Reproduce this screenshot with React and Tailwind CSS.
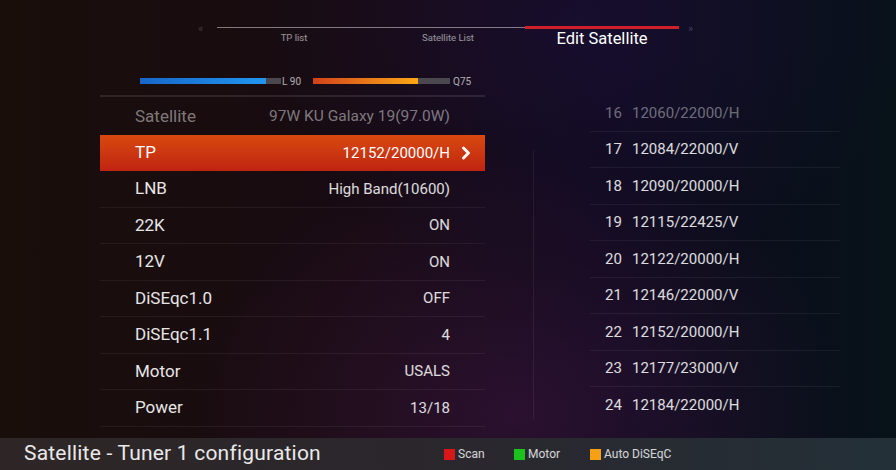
import { ChevronRight } from 'lucide-react'

const tabs = [
  { label: 'TP list' },
  { label: 'Satellite List' },
  { label: 'Edit Satellite', active: true },
]

const settings = [
  { label: 'Satellite', value: '97W KU Galaxy 19(97.0W)', dim: true },
  { label: 'TP', value: '12152/20000/H', active: true },
  { label: 'LNB', value: 'High Band(10600)' },
  { label: '22K', value: 'ON' },
  { label: '12V', value: 'ON' },
  { label: 'DiSEqc1.0', value: 'OFF' },
  { label: 'DiSEqc1.1', value: '4' },
  { label: 'Motor', value: 'USALS' },
  { label: 'Power', value: '13/18' },
]

const transponders = [
  { n: 16, tp: '12060/22000/H', dim: true },
  { n: 17, tp: '12084/22000/V' },
  { n: 18, tp: '12090/20000/H' },
  { n: 19, tp: '12115/22425/V' },
  { n: 20, tp: '12122/20000/H' },
  { n: 21, tp: '12146/22000/V' },
  { n: 22, tp: '12152/20000/H' },
  { n: 23, tp: '12177/23000/V' },
  { n: 24, tp: '12184/22000/H' },
]

const legend = [
  { label: 'Scan', color: 'bg-[#d81818]', w: 'w-[70px]' },
  { label: 'Motor', color: 'bg-[#1cc21c]', w: 'w-[76px]' },
  { label: 'Auto DiSEqC', color: 'bg-[#f5a015]', w: 'w-[90px]' },
]

export default function App() {
  return (
    <div className="w-[896px] h-[470px] overflow-hidden flex flex-col font-['Roboto','Noto_Sans',sans-serif] bg-[radial-gradient(ellipse_at_58%_88%,rgba(95,30,95,0.32),transparent_45%),radial-gradient(ellipse_at_65%_5%,rgba(40,20,80,0.35),transparent_40%),linear-gradient(to_right,#1a0e0b_0%,#170b12_40%,#0e0a1c_68%,#071219_100%)]">
      {/* Tabs */}
      <div className="h-[70px] flex items-start pt-[23px] pl-[198px] shrink-0">
        <span className="w-[19px] text-[11px] leading-[12px] text-white/20">«</span>
        <div className="flex pt-[4px]">
          {tabs.map((t) =>
            t.active ? (
              <div key={t.label} className="w-[154px] flex flex-col items-center border-t-[3px] border-[#cf1f2b] -mt-[1px]">
                <span className="text-[16.5px] leading-[20px] text-white">{t.label}</span>
              </div>
            ) : (
              <div key={t.label} className="w-[154px] flex flex-col items-center border-t border-white/45">
                <span className="mt-[4px] text-[9.5px] leading-[12px] text-white/55">{t.label}</span>
              </div>
            )
          )}
        </div>
        <span className="ml-[9px] text-[11px] leading-[12px] text-white/20">»</span>
      </div>

      <div className="flex h-[368px]">
        {/* Settings */}
        <div className="ml-[100px] w-[385px] flex flex-col">
          <div className="h-[22px] flex items-center pl-[40px] text-[10px] text-white/65">
            <div className="w-[126px] h-[6px] bg-gradient-to-r from-[#1767c9] to-[#2296f0]" />
            <div className="w-[15px] h-[6px] bg-[#4a474e]" />
            <span className="ml-[1px] w-[31px]">L 90</span>
            <div className="w-[105px] h-[6px] bg-gradient-to-r from-[#d2401a] to-[#fba714]" />
            <div className="w-[32px] h-[6px] bg-[#4a474e]" />
            <span className="ml-[3px]">Q75</span>
          </div>
          <div className="mt-[3px] h-[2px] bg-white/10" />
          <div className="mt-[1px] flex flex-col">
            {settings.map((s) =>
              s.active ? (
                <div
                  key={s.label}
                  className="h-[36.5px] flex items-center pl-[35px] pr-[9px] bg-gradient-to-b from-[#d9480f] to-[#bf2311] text-white"
                >
                  <span className="flex-1 text-[17px]">{s.label}</span>
                  <span className="text-[15px]">{s.value}</span>
                  <ChevronRight className="ml-[6px]" size={20} strokeWidth={3.4} />
                </div>
              ) : (
                <div
                  key={s.label}
                  className={`h-[36.5px] flex items-center pl-[35px] pr-[35px] ${s.dim ? 'text-white/45' : 'text-white/90 border-b border-white/[0.06]'}`}
                >
                  <span className="flex-1 text-[17px]">{s.label}</span>
                  <span className={`${s.dim ? 'text-[15.5px]' : 'text-[15px] text-white/85'}`}>{s.value}</span>
                </div>
              )
            )}
          </div>
        </div>

        {/* Transponder list */}
        <div className="flex">
          <div className="ml-[48px] mt-[80px] w-px h-[270px] bg-white/[0.06]" />
          <div className="ml-[56px] pt-[25px] flex flex-col">
            {transponders.map((t, i) => (
              <div
                key={t.n}
                className={`w-[250px] h-[36.5px] flex items-center pl-[15px] text-[15px] ${t.dim ? 'text-white/40' : 'text-white/85'} ${i < transponders.length - 1 ? 'border-b border-white/[0.06]' : ''}`}
              >
                <span className="w-[27px]">{t.n}</span>
                <span>{t.tp}</span>
              </div>
            ))}
          </div>
        </div>
      </div>

      {/* Footer */}
      <div className="h-[32px] flex items-center pl-[24px] bg-gradient-to-r from-[#2e2626] via-[#2a272d] to-[#233038]">
        <span className="w-[420px] text-[21px] tracking-[0.2px] text-white/90">Satellite - Tuner 1 configuration</span>
        {legend.map((l) => (
          <div key={l.label} className={`${l.w} flex items-center`}>
            <span className={`w-[11px] h-[11px] ${l.color}`} />
            <span className="ml-[3px] text-[12px] text-white/80">{l.label}</span>
          </div>
        ))}
      </div>
    </div>
  )
}
